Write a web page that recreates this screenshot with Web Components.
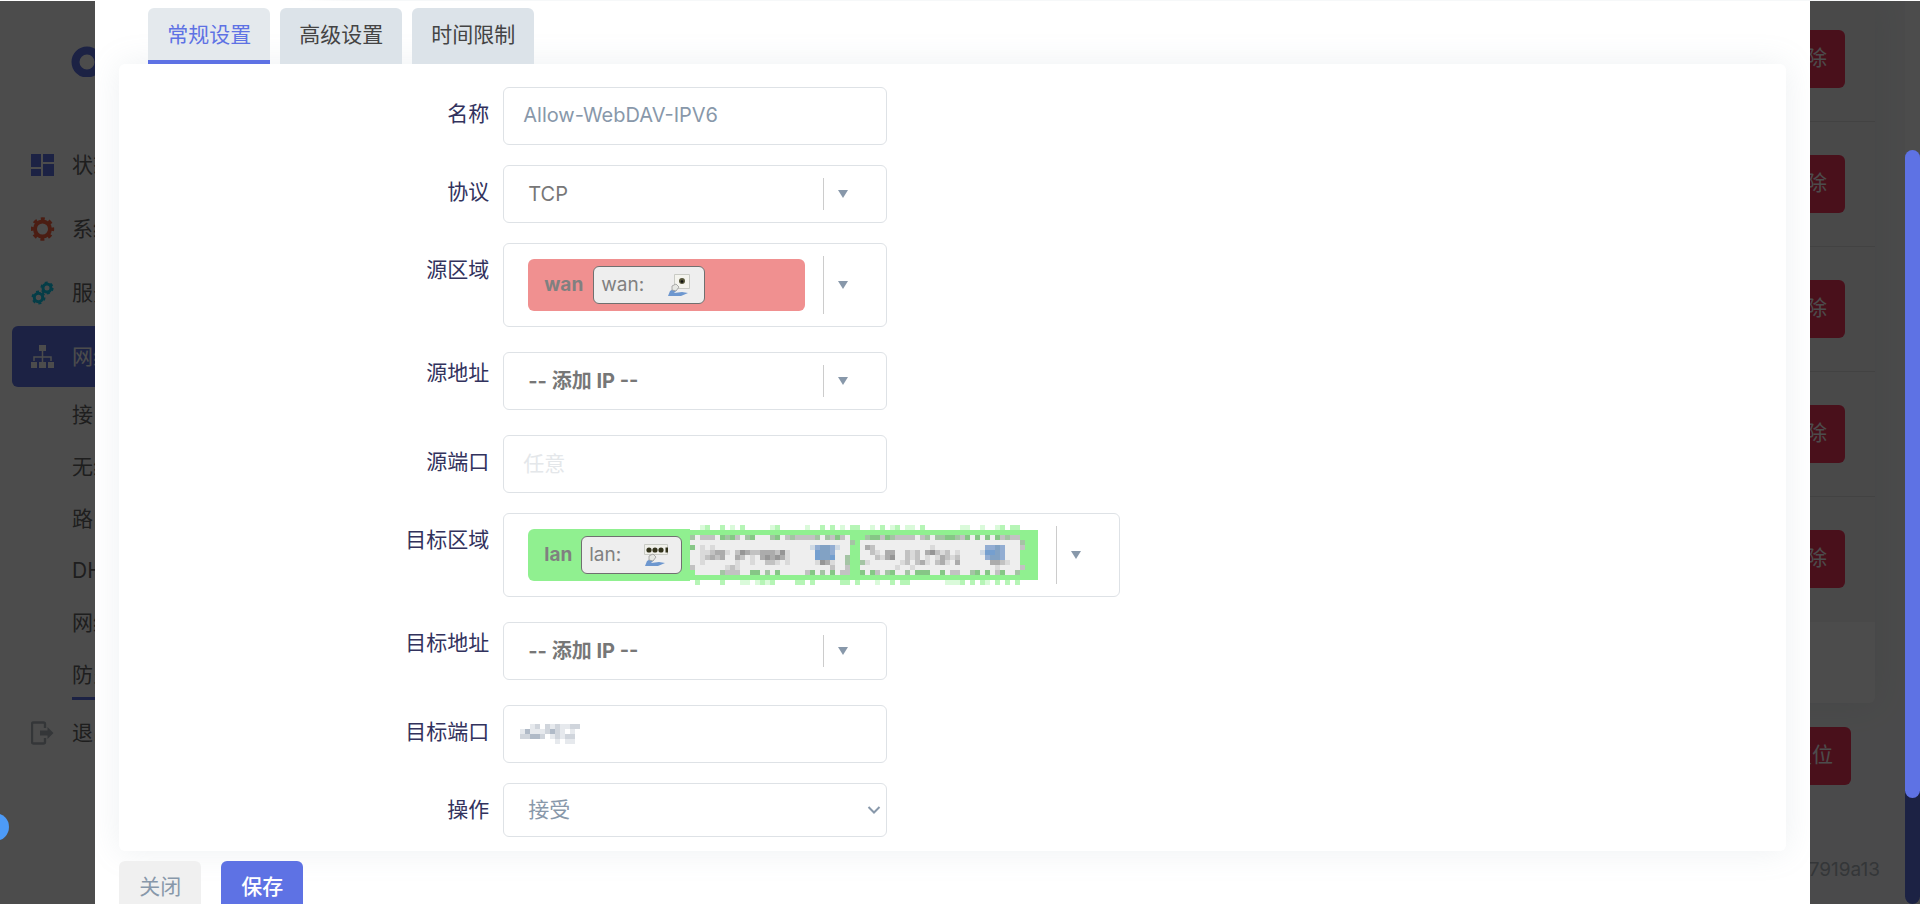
<!DOCTYPE html>
<html lang="zh-CN">
<head>
<meta charset="utf-8">
<title>防火墙 - 通信规则</title>
<style>
html, body { margin: 0; height: 100%; overflow: hidden; background: #fff; }
body { font-family: Inter, "Noto Sans CJK SC", sans-serif; font-size: 21px; line-height: 30px; color: #32325d; }
</style>
</head>
<body>
<app-shell></app-shell>
<script>
const define = (name, html, setup) => customElements.define(name, class extends HTMLElement {
  constructor() {
    super();
    const t = document.createElement('template');
    t.innerHTML = html;
    this.attachShadow({ mode: 'open' }).append(t.content.cloneNode(true));
  }
  connectedCallback() { if (setup) setup(this, this.shadowRoot); }
});

/* Sidebar entry: icon in a slot, label as content */
define('nav-item', `
<style>
:host { display: block; margin: 0 12px 3px; }
a { display: flex; align-items: center; gap: 17px; height: 61px; padding-left: 19px; border-radius: 6px; color: #666; text-decoration: none; }
:host([active]) a { background: #5e72e4; color: #fff; }
::slotted(svg) { width: 24px; height: 24px; flex: none; }
</style>
<a href="#"><slot name="icon"></slot><slot></slot></a>`);

define('sub-item', `
<style>
:host { display: block; margin: 0 24px 2px 72px; }
a { display: block; line-height: 50px; color: #666; text-decoration: none; }
:host([active]) a { box-shadow: inset 0 -3px #5e72e4; }
</style>
<a href="#"><slot></slot></a>`);

define('side-nav', `
<style>
:host { display: block; width: 280px; flex: none; background: #fff; }
.brand { display: flex; padding: 45px 0 57px 71px; }
.brand svg { width: 96px; height: 31px; }
</style>
<div class="brand"><svg viewBox="0 0 96 31"><circle cx="16" cy="16" r="11.500" fill="none" stroke="#5e72e4" stroke-width="8"/></svg></div>
<nav>
<nav-item><svg slot="icon" viewBox="0 0 24 24" fill="#5e72e4"><path d="M0 1h10v13H0zM12 1h11v8H12zM0 16h10v7H0zM12 11h11v12H12z"/></svg>状态</nav-item>
<nav-item><svg slot="icon" viewBox="0 0 24 24" fill="none" stroke="#fb6340"><circle cx="11.500" cy="12" r="7.500" stroke-width="4"/><circle cx="11.500" cy="12" r="10.200" stroke-width="3" stroke-dasharray="4 4.010" stroke-dashoffset="2"/></svg>系统</nav-item>
<nav-item><svg slot="icon" viewBox="0 0 24 24" fill="none" stroke="#11cdef"><circle cx="7.500" cy="16.500" r="4.200" stroke-width="3"/><circle cx="7.500" cy="16.500" r="6" stroke-width="2" stroke-dasharray="3 3.280"/><circle cx="16" cy="7" r="4" stroke-width="3"/><circle cx="16" cy="7" r="5.600" stroke-width="2" stroke-dasharray="2.900 2.960"/></svg>服务</nav-item>
<nav-item active><svg slot="icon" viewBox="0 0 24 24" fill="#fff"><path d="M8 0h7v6H8zM0 17h6v6H0zM8 17h7v6H8zM17 17h6v6h-6z"/><path d="M3 16v-4h17v4M11.500 6v11" fill="none" stroke="#fff" stroke-width="1.500"/></svg>网络</nav-item>
<sub-item>接口</sub-item><sub-item>无线</sub-item><sub-item>路由</sub-item><sub-item>DHCP/DNS</sub-item><sub-item>网络诊断</sub-item><sub-item active>防火墙</sub-item>
<nav-item><svg slot="icon" viewBox="0 0 24 24"><path d="M14 7V3q0-1.500-1.500-1.500h-10Q1 1.500 1 3v18q0 1.500 1.500 1.500h10Q14 22.500 14 21v-4" fill="none" stroke="#adb5bd" stroke-width="2.400"/><path d="M9 9.500h7.500V6l6 6-6 6v-3.500H9z" fill="#adb5bd"/></svg>退出</nav-item>
</nav>`);

/* Table of rules behind the dialog */
define('rule-list', `
<style>
:host { display: block; flex: 1; background: #f8f9fa; }
.card { margin: 0 30px 0 45px; background: #fff; border-radius: 0 0 6px 6px; padding-bottom: 81px; box-shadow: 0 0 32px rgba(136,152,170,.15); }
table { width: 100%; border-collapse: collapse; background: #f6f6f6; }
td { height: 124px; padding: 0 30px 0 0; border-bottom: 1px solid #dedede; text-align: right; }
tr:first-child td { height: 116px; padding-bottom: 4px; }
tr:last-child td { border-color: #f6f6f6; }
button { font: inherit; height: 58px; padding: 0 18px 2px; border: 0; border-radius: 6px; background: #f5365c; color: #fff; }
.actions { display: flex; justify-content: flex-end; padding: 24px 54px 0; }
footer { padding: 70px 25px 0; font-size: 19px; text-align: right; color: #adb5bd; }
</style>
<div class="card"><table></table></div>
<div class="actions"><button>复位</button></div>
<footer>7919a13</footer>`, (el, root) => {
  root.querySelector('table').innerHTML = '<tr><td><button>删除</button></td></tr>'.repeat(5);
});

define('tab-button', `
<style>
:host { display: block; }
button { font: inherit; line-height: 30px; height: 56px; padding: 0 19px 3px; border: 0; border-radius: 6px 6px 0 0; background: #dce3e9; color: #444; }
:host([active]) button { background: #e4e9ed; color: #5e72e4; box-shadow: inset 0 -4px #5e72e4; }
</style>
<button role="tab"><slot></slot></button>`);

/* Drop-down frame: value, divider and arrow */
define('drop-frame', `
<style>
:host { display: flex; box-sizing: border-box; min-width: 384px; min-height: 58px; border: 1px solid #dee2e6; border-radius: 6px; background: #fff; }
.value { flex: 1; display: flex; align-items: center; }
.arrow { width: 40px; padding-left: 14px; margin: 12px 8px 12px 0; border-left: 1px solid #ccc; display: flex; align-items: center; }
i { border: 5px solid transparent; border-top: 8px solid #8898aa; border-bottom: 0; }
</style>
<div class="value"><slot></slot></div><div class="arrow"><i></i></div>`);

/* One form line: label column and control column */
const FIELD_CSS = `
<style>
:host { display: grid; grid-template-columns: 370px max-content; column-gap: 14px; margin-bottom: 20px; }
:host([spaced]) { margin-bottom: 25px; }
:host([tight]) label { padding-top: 6px; }
:host([last]) { margin-bottom: 0; }
label { text-align: right; padding-top: 12px; }
input, select.plain { font: inherit; box-sizing: border-box; width: 384px; height: 58px; padding: 0 19px 2px; border: 1px solid #dee2e6; border-radius: 6px; color: #8898aa; background: #fff; outline: 0; }
input.latin { font-size: 20px; }
input::placeholder { color: #e4e7ea; opacity: 1; }
select { appearance: none; font: inherit; font-size: 20px; border: 0; background: none; outline: 0; color: #777; padding: 0 24px; width: 319px; height: 56px; }
select.plain { height: 54px; padding: 0 24px; }
.strong { font-weight: 700; }
.stack { display: grid; align-items: center; }
.stack > * { grid-area: 1 / 1; }
.stack svg { justify-self: end; pointer-events: none; }
.stack .mask { justify-self: start; margin-left: 17px; }
button { font: inherit; display: flex; align-items: center; border: 0; background: none; color: #808080; padding: 0 18px 0 24px; height: 82px; }
.zone { display: flex; align-items: center; justify-content: space-between; height: 52px; box-sizing: border-box; padding: 0 8px 0 16px; border-radius: 6px; font-size: 19px; font-weight: 700; }
.wan { background: #f09090; width: 277px; padding-right: 100px; }
.lan { background: #90f090; width: 162px; border-radius: 6px 0 0 6px; }
.chip { flex: none; display: flex; align-items: center; justify-content: space-between; box-sizing: border-box; height: 38px; padding: 0 13px 0 7px; border: 1px solid #707070; border-radius: 6px; background: #eee; font-weight: 400; width: 112px; }
.lan .chip { width: 101px; }
.chip svg { width: 24px; height: 24px; }
</style>`;
define('text-field', FIELD_CSS + `<label for="c"></label><div class="stack"><input id="c"></div>`, (el, r) => {
  r.querySelector('label').textContent = el.getAttribute('label');
  const input = r.querySelector('input');
  input.value = el.getAttribute('value') || '';
  if (input.value) input.className = 'latin';
  input.placeholder = el.getAttribute('placeholder') || '';
  if (el.hasAttribute('masked')) r.querySelector('.stack').insertAdjacentHTML('beforeend', pixels(MASK_PORT, 60, 20, 'mask'));
});
define('select-field', FIELD_CSS + `<label for="c"></label><drop-frame><select id="c"><option></option></select></drop-frame>`, (el, r) => {
  r.querySelector('label').textContent = el.getAttribute('label');
  r.querySelector('option').textContent = el.getAttribute('value');
  if (el.hasAttribute('spaced')) r.querySelector('select').className = 'strong';
});
define('action-field', FIELD_CSS + `<label for="c">操作</label><div class="stack"><select id="c" class="plain"><option>接受</option></select>
<svg width="20" height="10" viewBox="0 0 20 10"><path d="M1.500 2l5.500 5.500L12.500 2" fill="none" stroke="#8898aa" stroke-width="2"/></svg></div>`);

const CABLE = `<path d="M1 23l2-5 5-3 2 2-3 3 8-1 6 1-7 3z" fill="#6d97cf"/><path d="M5 13l4-2 3 3-3 4-4-1z" fill="#e6e8e4" stroke="#999" stroke-width=".800"/>`;
const PORT_ICON = `<svg viewBox="0 0 24 24"><path d="M7.500 1.500h15v14h-15z" fill="#f4f4ee" stroke="#c9cbc5"/><circle cx="15" cy="8" r="3" fill="#55553a"/><circle cx="15" cy="8.500" r="1.300" fill="#111"/>${CABLE}</svg>`;
const BRIDGE_ICON = `<svg viewBox="0 0 24 24"><path d="M.500 1.500h23v10H.500z" fill="#f0f0ea" stroke="#c9cbc5"/><g fill="#33331c"><circle cx="5" cy="7" r="2.600"/><circle cx="11" cy="7" r="2.600"/><circle cx="17" cy="7" r="2.600"/><path d="M21.500 4.500h2.500v5h-2.500z"/></g>${CABLE}</svg>`;

/* Pixelated redactions: one letter for each 5px cell */
const INK = { a:'#dafada', b:'#b6f5b6', n:'#90f090', e:'#eee', d:'#dadada', c:'#c2c2c2', m:'#acacac', k:'#969696', g:'#a4c4a4', G:'#86c686',
  p:'#cfd9e4', B:'#759fcf', C:'#92add2', V:'#82a2c4', l:'#e6e9ed', x:'#d0d5dc', y:'#b0bac7' };
const E = n => 'e'.repeat(n), N = 'n'.repeat(70);
const MASK_LAN = [
'..ab..b.a.b.....ab.....a..b.b.a.bb..a.b.ab.aa.b.......aa..a..ab.bb',
N,
'geccceGgGcegGeeegGecgccccgegcGcenn' + 'ngGGcGgccccecgeggGGgcGeGeGeGcgccnnnn',
E(32) + 'gn' + E(32) + 'gnnn',
'Gedede' + E(18) + 'pCVVCpeenn' + 'emceeeeeee' + 'eeeedeeeee' + 'eeeeeCCVCe' + 'eecnnn',
'eeddcmmdeckmccmmmckdeeeeeBVVCeeenn' + 'eecdemmeecdcemkcdcedeeeepBBVCeeennnn',
'eedcmcmeemcedemkmkmdeeeeeBVVBeegnn' + 'eeecdmkeecdcededmcdceeeeeCVVCeeennnn',
'eedeeeeeedeedeeccdedeeeeedkmdeegnn' + 'gdeeeeeedcecmdecmdemeeeeeemmcdeennnn',
'ceeeeeedcd' + E(10) + 'eeeeeeeeceecnn' + 'eeeeeeedeedeeeeeeeeeeeeeeeedeeeecnnn',
'neeeeegccceeGGegeGeeeeecGegeGeccnn' + 'GeGcegGeegeGGGeeGecceegGeGecGeegnnnn',
N,
'.b....b...aa.abab....bb.b.....bb.b...a..b.bb.......aaab.b.ba.b.b.b'];
const MASK_PORT = ['..lx.xlxllxx', 'lylll' + 'xyxl.l.', 'xxyyx.lxlxx.', '.......l.ll.'];
function pixels(rows, w, h, cls) {
  let s = '';
  rows.forEach((row, y) => [...row].forEach((k, x) => {
    if (INK[k]) s += `<rect x="${x * 5}" y="${y * 5}" width="5" height="5" fill="${INK[k]}"/>`;
  }));
  return `<svg class="${cls}" aria-hidden="true" width="${w}" height="${h}" shape-rendering="crispEdges">${s}</svg>`;
}
define('zone-field', FIELD_CSS + `<label for="c"></label><drop-frame><button id="c" aria-haspopup="listbox"><span class="zone"><span class="name"></span><span class="chip"><span></span></span></span></button></drop-frame>`, (el, r) => {
  const z = el.getAttribute('zone');
  r.querySelector('label').textContent = el.getAttribute('label');
  r.querySelector('.zone').classList.add(z);
  r.querySelector('.name').textContent = z;
  r.querySelector('.chip span').textContent = z + ':';
  r.querySelector('.chip').insertAdjacentHTML('beforeend', z === 'wan' ? PORT_ICON : BRIDGE_ICON);
  if (z === 'lan') r.querySelector('button').insertAdjacentHTML('beforeend', pixels(MASK_LAN, 348, 60, 'cells'));
});

define('rule-dialog', `
<style>
:host { display: block; background: #fff; margin: 0 5%; padding: 7px 24px 0; overflow: hidden; }
.tabs { display: flex; gap: 10px; padding-left: 29px; }
.panel { padding: 23px 0 14px; border-radius: 6px; background: #fff; box-shadow: 0 0 32px rgba(136,152,170,.15); }
.buttons { display: flex; gap: 20px; padding-top: 10px; }
.buttons button { font: inherit; height: 58px; padding: 0 20px 6px; border: 0; border-radius: 6px; background: #5e72e4; color: #fff; font-weight: 500; }
.buttons .quiet { background: #f0f0f0; color: #8898aa; font-weight: 400; }
</style>
<div class="tabs" role="tablist"><tab-button active>常规设置</tab-button><tab-button>高级设置</tab-button><tab-button>时间限制</tab-button></div>
<div class="panel">
<text-field label="名称" value="Allow-WebDAV-IPV6"></text-field>
<select-field label="协议" value="TCP"></select-field>
<zone-field label="源区域" zone="wan" spaced></zone-field>
<select-field label="源地址" value="-- 添加 IP --" spaced tight></select-field>
<text-field label="源端口" placeholder="任意"></text-field>
<zone-field label="目标区域" zone="lan" spaced></zone-field>
<select-field label="目标地址" value="-- 添加 IP --" spaced tight></select-field>
<text-field label="目标端口" masked></text-field>
<action-field last></action-field>
</div>
<div class="buttons"><button class="quiet">关闭</button><button>保存</button></div>`);

define('app-shell', `
<style>
:host { display: block; position: relative; height: 100vh; overflow: hidden; }
.page { display: flex; height: 100%; padding-top: 1px; box-sizing: border-box; }
.track { width: 15px; flex: none; display: flex; flex-direction: column; }
.track i { flex: 1; margin-top: 190px; border-radius: 8px; background: #5e72e4; }
.overlay { position: absolute; inset: 1px 0 0; display: flex; background: rgba(0,0,0,.7); }
.scroll { flex: 1; display: grid; }
.overlay .track i { margin: 149px 0 106px; }
.bubble { position: absolute; left: -19px; bottom: 63px; width: 28px; height: 28px; border-radius: 50%; background: #4d9bf8; }
</style>
<div class="page"><side-nav></side-nav><rule-list></rule-list><div class="track"><i></i></div></div>
<div class="overlay"><div class="scroll"><rule-dialog></rule-dialog></div><div class="track"><i></i></div></div>
<div class="bubble"></div>`);
</script>
</body>
</html>
